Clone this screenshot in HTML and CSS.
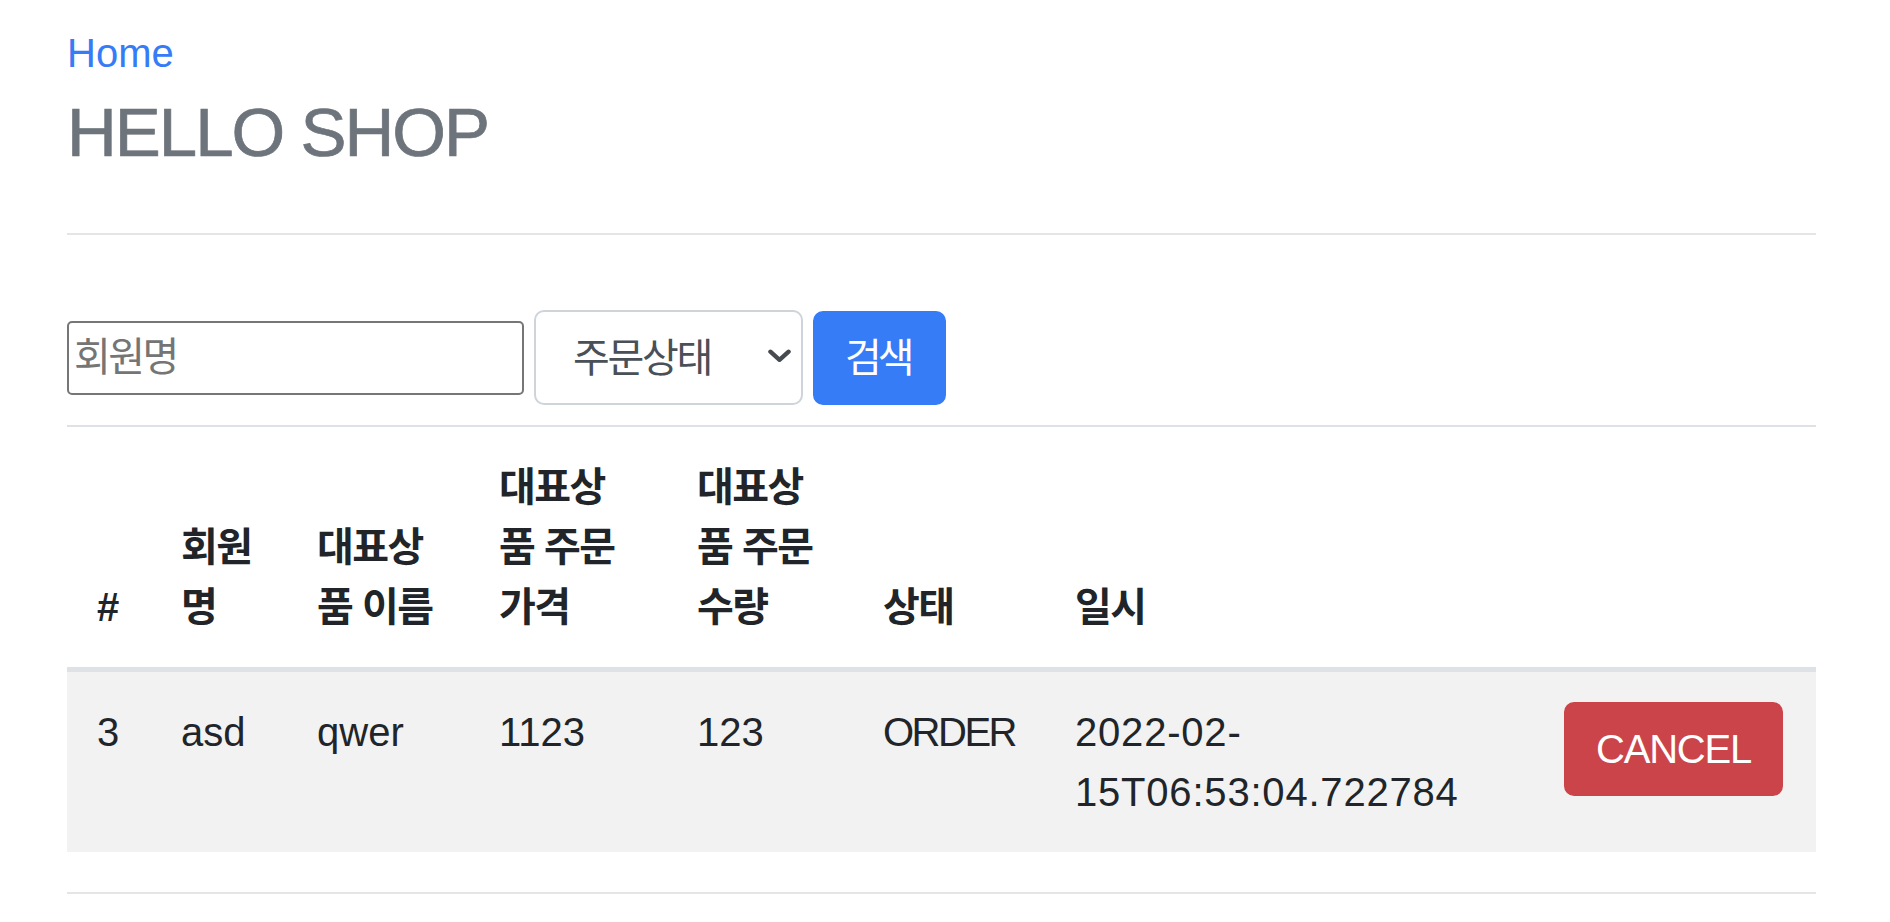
FILE: index.html
```html
<!DOCTYPE html>
<html lang="ko">
<head>
<meta charset="utf-8">
<title>HELLO SHOP</title>
<link rel="stylesheet" href="styles.css">
</head>
<body>
<div class="container">
  <div class="header">
    <ul class="nav">
      <li><a href="#" class="nav-link">Home</a></li>
    </ul>
    <h3 class="brand">HELLO SHOP</h3>
  </div>
  <form class="search">
    <input class="member" type="text" placeholder="회원명">
    <div class="select-wrap">
      <select class="status">
        <option>주문상태</option>
        <option>ORDER</option>
        <option>CANCEL</option>
      </select>
      <svg class="chev" viewBox="0 0 24 14" aria-hidden="true"><path d="M2.5 2.5 L12 11 L21.5 2.5" fill="none" stroke="#474b50" stroke-width="4.5" stroke-linecap="round" stroke-linejoin="round"/></svg>
    </div>
    <button type="button" class="btn btn-primary">검색</button>
  </form>
  <table class="orders">
    <colgroup>
      <col class="c-id"><col class="c-member"><col class="c-item"><col class="c-price"><col class="c-count"><col class="c-status"><col class="c-date"><col class="c-action">
    </colgroup>
    <thead>
      <tr>
        <th>#</th>
        <th>회원명</th>
        <th>대표상품 이름</th>
        <th>대표상품 주문가격</th>
        <th>대표상품 주문수량</th>
        <th>상태</th>
        <th>일시</th>
        <th></th>
      </tr>
    </thead>
    <tbody>
      <tr>
        <td>3</td>
        <td>asd</td>
        <td>qwer</td>
        <td>1123</td>
        <td>123</td>
        <td class="narrow">ORDER</td>
        <td class="wide">2022-02-15T06:53:04.722784</td>
        <td><button type="button" class="btn btn-danger">CANCEL</button></td>
      </tr>
    </tbody>
  </table>
  <div class="footer"></div>
</div>
</body>
</html>
```
FILE: styles.css
```css
* { box-sizing: border-box; }
html, body { margin: 0; padding: 0; background: #fff; }
body {
  font-family: "Liberation Sans", "Noto Sans CJK KR", sans-serif;
  font-size: 40px;
  line-height: 60px;
  color: #212529;
}
.container { padding: 23px 74px 0 67px; }

.header {
  padding-bottom: 50px;
  border-bottom: 2px solid #e5e5e5;
  margin-bottom: 75px;
}
.nav { list-style: none; margin: 0; padding: 0; display: flex; }
.nav-link { color: #367cf6; text-decoration: none; }
.brand {
  margin: 0;
  font-size: 69px;
  line-height: 100px;
  font-weight: 400;
  letter-spacing: -2px;
  color: #6d747b;
  -webkit-text-stroke: 0.7px #6d747b;
}

.search {
  display: flex;
  align-items: center;
  height: 95px;
  margin-bottom: 20px;
}
.member {
  width: 457px;
  height: 74px;
  margin: 0;
  padding: 0 5px;
  border: 2px solid #767676;
  border-radius: 5px;
  background: #fff;
  font-family: inherit;
  font-size: 40px;
  color: #212529;
}
.member::placeholder { color: #757575; letter-spacing: -2.5px; }
.select-wrap { position: relative; margin: 0 10px; }
.status {
  -webkit-appearance: none;
  appearance: none;
  display: block;
  width: 269px;
  height: 95px;
  margin: 0;
  padding: 0 50px 0 37px;
  border: 2px solid #ced4da;
  border-radius: 10px;
  background: #fff;
  color: #495057;
  font-family: inherit;
  font-size: 40px;
  letter-spacing: -2.3px;
}
.chev {
  position: absolute;
  right: 12px;
  top: 50%;
  width: 23px;
  height: 14px;
  margin-top: -9px;
  pointer-events: none;
}
.btn {
  display: inline-block;
  margin: 0;
  font-family: inherit;
  font-size: 40px;
  line-height: 60px;
  padding: 15px 30px;
  border: 2px solid transparent;
  border-radius: 10px;
  color: #fff;
  cursor: pointer;
}
.btn-primary {
  background: #367cf6;
  border-color: #367cf6;
  letter-spacing: -4px;
  padding: 15px 33px 15px 30px;
}
.btn-danger {
  background: #cb444a;
  border-color: #cb444a;
  letter-spacing: -1.2px;
}

.orders {
  width: 1749px;
  border-collapse: collapse;
  table-layout: fixed;
  margin-bottom: 40px;
}
.c-id { width: 84px; }
.c-member { width: 136px; }
.c-item { width: 182px; }
.c-price { width: 198px; }
.c-count { width: 186px; }
.c-status { width: 192px; }
.c-date { width: 489px; }
.c-action { width: 282px; }
.orders th, .orders td { padding: 30px; text-align: left; }
.orders th {
  vertical-align: bottom;
  font-weight: 700;
  letter-spacing: -1.5px;
  border-top: 2px solid #dee2e6;
  border-bottom: 5px solid #dee2e6;
}
.orders td {
  vertical-align: top;
  border-top: 2px solid #dee2e6;
}
.orders tbody tr:nth-of-type(odd) { background: #f2f2f2; }
.orders td.narrow { letter-spacing: -2.5px; }
.orders td.wide { letter-spacing: 0.8px; }
.footer { border-top: 2px solid #e5e5e5; }
```
